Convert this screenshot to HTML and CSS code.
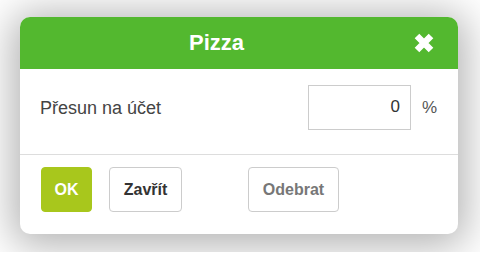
FILE: index.html
```html
<!DOCTYPE html>
<html lang="cs">
<head>
    <meta charset="UTF-8">
    <meta name="viewport" content="width=device-width, initial-scale=1.0">
    <title>Pizza</title>
    <link rel="stylesheet" href="styles.css">
</head>
<body>
    <div class="dialog">
        <div class="dialog-header">
            <h1 class="dialog-title">Pizza</h1>
            <button class="dialog-close" title="Zavřít">
                <svg width="22" height="20" viewBox="0 0 22 20">
                    <path d="M4 3 L18 17 M18 3 L4 17" stroke="#fff" stroke-width="6.5" stroke-linecap="butt" fill="none"/>
                </svg>
            </button>
        </div>

        <div class="dialog-body">
            <label class="field-label" for="presun">Přesun na účet</label>
            <input id="presun" class="field-input" type="text" value="0">
            <span class="field-unit">%</span>
        </div>

        <div class="dialog-footer">
            <button class="btn btn-ok">OK</button>
            <button class="btn btn-default">Zavřít</button>
            <button class="btn btn-muted">Odebrat</button>
        </div>
    </div>
</body>
</html>
```

FILE: styles.css
```css
html, body { margin: 0; padding: 0; }
body { font-family: "Liberation Sans", Arial, sans-serif; background: #fff; padding: 17px 22px 18px 20px; }

.dialog { width: 438px; background: #fff; border-radius: 10px; box-shadow: 0 4px 40px 8px rgba(0,0,0,0.3); overflow: hidden; }

.dialog-header { display: flex; align-items: center; height: 52px; background: #53b82f; padding-right: 23px; }
.dialog-title { flex: 1; margin: 0; text-align: center; color: #fff; font-size: 22px; font-weight: bold; }
.dialog-close { display: flex; padding: 0; background: none; border: none; cursor: pointer; }

.dialog-body { display: flex; align-items: center; height: 86px; padding: 0 20px; border-bottom: 1px solid #ddd; box-sizing: border-box; }
.field-label { flex: 1; font-size: 18px; color: #444; margin-top: -7px; }
.field-input { width: 103px; height: 45px; box-sizing: border-box; border: 1px solid #ccc; padding: 0 10px; text-align: right; font-family: "Liberation Sans", Arial, sans-serif; font-size: 17px; color: #333; margin-top: -9px; }
.field-unit { font-size: 17px; color: #555; margin-left: 11px; width: 16px; margin-top: -7px; }

.dialog-footer { display: flex; gap: 17px; padding: 12px 21px 22px; }
.btn { height: 45px; padding: 0; font-family: "Liberation Sans", Arial, sans-serif; font-size: 16px; font-weight: bold; border-radius: 4px; border: 1px solid #ccc; background: #fff; cursor: pointer; }
.btn-ok { background: #a8c71c; border-color: #a8c71c; color: #fff; width: 51px; }
.btn-default { color: #333; width: 73px; }
.btn-muted { color: #777; width: 91px; margin-left: 49px; }
```
